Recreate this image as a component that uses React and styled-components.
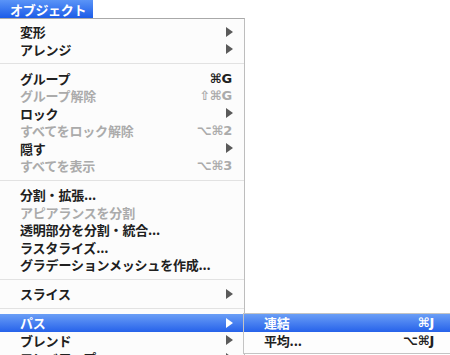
import styled, { createGlobalStyle } from "styled-components";

const GlobalStyle = createGlobalStyle`
  html, body {
    margin: 0;
    padding: 0;
    background: #ffffff;
    overflow: hidden;
  }
  body {
    font-family: "Noto Sans CJK JP", "Noto Sans", sans-serif;
  }
`;

const mainItems = [
  { label: "変形", arrow: true },
  { label: "アレンジ", arrow: true },
  { sep: true },
  { label: "グループ", key: "⌘G" },
  { label: "グループ解除", key: "⇧⌘G", disabled: true },
  { label: "ロック", arrow: true },
  { label: "すべてをロック解除", key: "⌥⌘2", disabled: true },
  { label: "隠す", arrow: true },
  { label: "すべてを表示", key: "⌥⌘3", disabled: true },
  { sep: true },
  { label: "分割・拡張..." },
  { label: "アピアランスを分割", disabled: true },
  { label: "透明部分を分割・統合..." },
  { label: "ラスタライズ..." },
  { label: "グラデーションメッシュを作成..." },
  { sep: true },
  { label: "スライス", arrow: true },
  { sep: true },
  { label: "パス", arrow: true, active: true, sub: true },
  { label: "ブレンド", arrow: true },
  { label: "エンベロープ", arrow: true },
];

const subItems = [
  { label: "連結", key: "⌘J", active: true },
  { label: "平均...", key: "⌥⌘J" },
];

const Screen = styled.div`
  width: 450px;
  height: 355px;
  overflow: hidden;
  background: #ffffff;
`;

const MenuBar = styled.div`
  display: flex;
  height: 18px;
  background: #ffffff;
`;

const MenuTitle = styled.div`
  width: 93px;
  box-sizing: border-box;
  padding-left: 10px;
  display: flex;
  align-items: center;
  background: linear-gradient(#5a94f7, #1c5ce8);
  color: #ffffff;
  font-size: 13px;
  font-weight: 700;
  letter-spacing: -0.3px;
`;

const Panel = styled.div`
  width: 245px;
  box-sizing: border-box;
  border-top: 1px solid #a9a9a9;
  border-right: 1px solid #bdbdbd;
  background: #fcfcfc;
  padding-top: 4px;
`;

const Row = styled.div`
  position: relative;
  height: 17.5px;
  display: flex;
  align-items: center;
  padding: 0 ${(p) => p.$right}px 0 20px;
  font-size: 13px;
  font-weight: 700;
  letter-spacing: -0.2px;
  color: ${(p) => (p.$active ? "#ffffff" : p.$disabled ? "#ababab" : "#202020")};
  background: ${(p) =>
    p.$active ? "linear-gradient(#6a9ef6, #2662ea)" : "transparent"};
  white-space: nowrap;
`;

const Label = styled.span`
  flex: 1;
`;

const Shortcut = styled.span`
  font-family: "DejaVu Sans", sans-serif;
  font-size: 13px;
  font-weight: 700;
  letter-spacing: -0.3px;
`;

const Arrow = styled.span`
  width: 0;
  height: 0;
  border-left: 7px solid ${(p) => (p.$active ? "#ffffff" : "#5a5a5a")};
  border-top: 5px solid transparent;
  border-bottom: 5px solid transparent;
`;

const Separator = styled.div`
  height: 11.5px;
  display: flex;
  align-items: center;
  &::after {
    content: "";
    flex: 1;
    height: 1px;
    background: #e2e2e2;
  }
`;

const SubMenu = styled.div`
  position: absolute;
  left: calc(100% - 1px);
  top: -1px;
  width: 207px;
  box-sizing: border-box;
  border: 1px solid #c4c4c4;
  border-right: none;
  background: #fdfdfd;
  padding-bottom: 4px;
`;

function SubRows() {
  return (
    <SubMenu>
      {subItems.map((it) => (
        <Row key={it.label} $active={it.active} $right={16}>
          <Label>{it.label}</Label>
          <Shortcut>{it.key}</Shortcut>
        </Row>
      ))}
    </SubMenu>
  );
}

export default function App() {
  return (
    <Screen>
      <GlobalStyle />
      <MenuBar>
        <MenuTitle>オブジェクト</MenuTitle>
      </MenuBar>
      <Panel>
        {mainItems.map((it, i) =>
          it.sep ? (
            <Separator key={i} />
          ) : (
            <Row
              key={i}
              $active={it.active}
              $disabled={it.disabled}
              $right={it.arrow ? 11 : 12}
            >
              <Label>{it.label}</Label>
              {it.key && <Shortcut>{it.key}</Shortcut>}
              {it.arrow && <Arrow $active={it.active} />}
              {it.sub && <SubRows />}
            </Row>
          )
        )}
      </Panel>
    </Screen>
  );
}
